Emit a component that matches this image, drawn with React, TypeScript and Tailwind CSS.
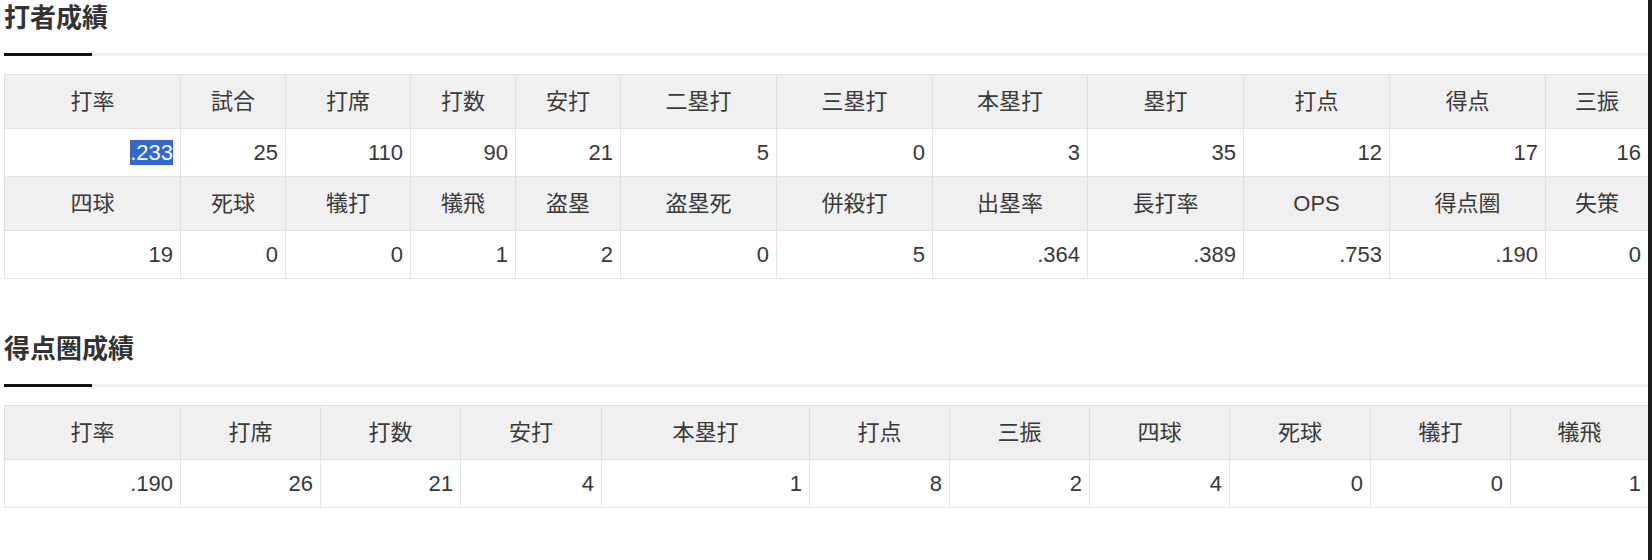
import React from "react";

type Cell = { label: string; value: string; width: string; selected?: boolean };

const battingTop: Cell[] = [
  { label: "打率", value: ".233", width: "w-[176px]", selected: true },
  { label: "試合", value: "25", width: "w-[105px]" },
  { label: "打席", value: "110", width: "w-[125px]" },
  { label: "打数", value: "90", width: "w-[105px]" },
  { label: "安打", value: "21", width: "w-[105px]" },
  { label: "二塁打", value: "5", width: "w-[156px]" },
  { label: "三塁打", value: "0", width: "w-[156px]" },
  { label: "本塁打", value: "3", width: "w-[155px]" },
  { label: "塁打", value: "35", width: "w-[156px]" },
  { label: "打点", value: "12", width: "w-[146px]" },
  { label: "得点", value: "17", width: "w-[156px]" },
  { label: "三振", value: "16", width: "w-[103px]" },
];

const battingBottom: Cell[] = [
  { label: "四球", value: "19", width: "" },
  { label: "死球", value: "0", width: "" },
  { label: "犠打", value: "0", width: "" },
  { label: "犠飛", value: "1", width: "" },
  { label: "盗塁", value: "2", width: "" },
  { label: "盗塁死", value: "0", width: "" },
  { label: "併殺打", value: "5", width: "" },
  { label: "出塁率", value: ".364", width: "" },
  { label: "長打率", value: ".389", width: "" },
  { label: "OPS", value: ".753", width: "" },
  { label: "得点圏", value: ".190", width: "" },
  { label: "失策", value: "0", width: "" },
];

const scoring: Cell[] = [
  { label: "打率", value: ".190", width: "w-[176px]" },
  { label: "打席", value: "26", width: "w-[140px]" },
  { label: "打数", value: "21", width: "w-[140px]" },
  { label: "安打", value: "4", width: "w-[141px]" },
  { label: "本塁打", value: "1", width: "w-[208px]" },
  { label: "打点", value: "8", width: "w-[140px]" },
  { label: "三振", value: "2", width: "w-[140px]" },
  { label: "四球", value: "4", width: "w-[140px]" },
  { label: "死球", value: "0", width: "w-[141px]" },
  { label: "犠打", value: "0", width: "w-[140px]" },
  { label: "犠飛", value: "1", width: "w-[138px]" },
];

function HeaderRow({ cells }: { cells: Cell[] }) {
  return (
    <tr className="h-[54px] bg-[#f0f0f0]">
      {cells.map((c) => (
        <th
          key={c.label}
          className="border border-[#e0e0e0] px-[7px] text-center font-normal text-[#3a3a3a]"
        >
          {c.label}
        </th>
      ))}
    </tr>
  );
}

function ValueRow({ cells }: { cells: Cell[] }) {
  return (
    <tr className="h-[48px] bg-white">
      {cells.map((c) => (
        <td
          key={c.label}
          className="border border-[#e6e6e6] px-[7px] text-right text-[#383838]"
        >
          {c.selected ? (
            <span className="bg-[#3367d1] text-white">{c.value}</span>
          ) : (
            c.value
          )}
        </td>
      ))}
    </tr>
  );
}

function Section({ title, children }: { title: string; children: React.ReactNode }) {
  return (
    <section className="mb-[52px]">
      <h2 className="text-[26px] font-bold leading-[37px] text-[#333]">{title}</h2>
      <div className="mt-[16px] flex h-[3px]">
        <span className="w-[88px] bg-[#111]" />
        <span className="flex-1 bg-[#eeeeee]" />
      </div>
      {children}
    </section>
  );
}

function StatTable({ rows }: { rows: Cell[][] }) {
  return (
    <table className="mt-[18px] w-[1644px] table-fixed border border-[#dddddd] text-[22px]">
      <colgroup>
        {rows[0].map((c) => (
          <col key={c.label} className={c.width} />
        ))}
      </colgroup>
      <tbody>
        {rows.map((r, i) =>
          i % 2 === 0 ? <HeaderRow key={i} cells={r} /> : <ValueRow key={i} cells={r} />
        )}
      </tbody>
    </table>
  );
}

export default function App() {
  return (
    <div className="flex h-[560px] w-[1652px] overflow-hidden bg-white font-['Liberation_Sans','Noto_Sans_CJK_JP',sans-serif]">
      <main className="w-[1648px] overflow-hidden pl-[4px]">
        <Section title="打者成績">
          <StatTable rows={[battingTop, battingTop, battingBottom, battingBottom]} />
        </Section>
        <Section title="得点圏成績">
          <StatTable rows={[scoring, scoring]} />
        </Section>
      </main>
      <div className="w-[4px] bg-[#1c1c1c]" />
    </div>
  );
}
